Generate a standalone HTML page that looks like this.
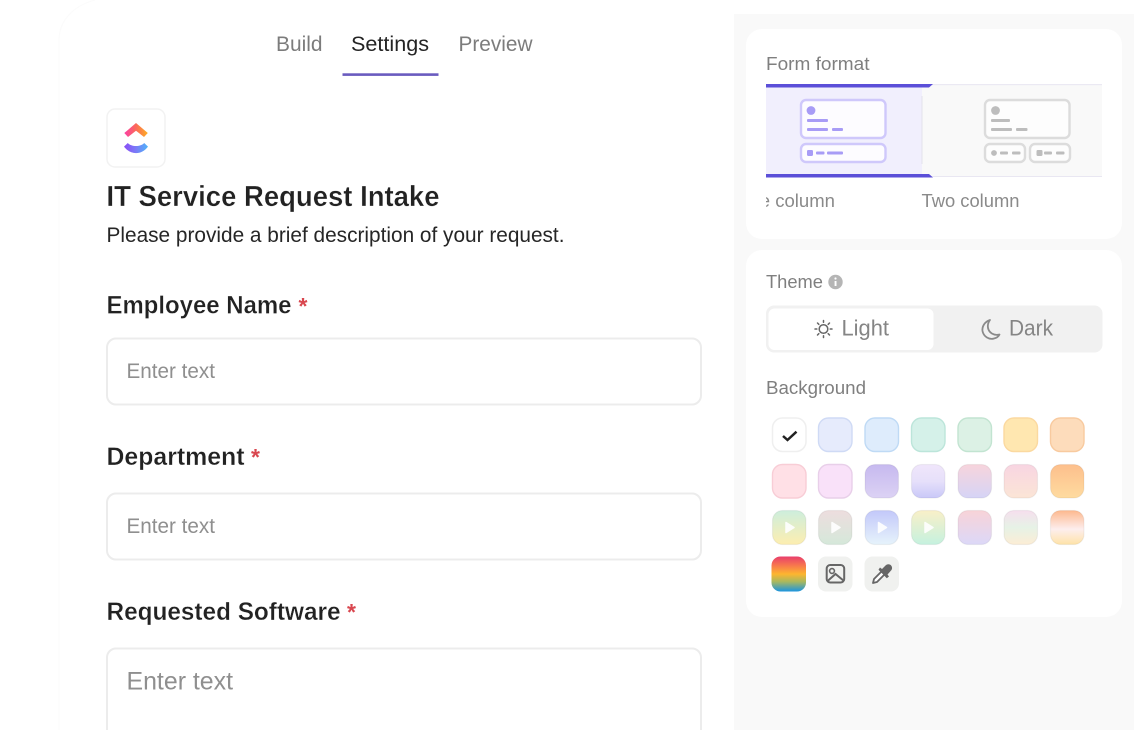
<!DOCTYPE html>
<html><head><meta charset="utf-8"><style>
html,body{margin:0;padding:0;background:#fff;width:1134px;height:730px;overflow:hidden}
svg{display:block}
text{font-family:"Liberation Sans",sans-serif}
.s{stroke:#000;stroke-opacity:.05;stroke-width:1.200}
</style></head><body>
<svg width="1134" height="730" viewBox="0 0 1134 730" xmlns="http://www.w3.org/2000/svg">
<defs>
<linearGradient id="lg1" x1="0" x2="1" y1="0" y2="0"><stop offset="0" stop-color="#fb3ea6"/><stop offset=".5" stop-color="#fb6a5a"/><stop offset="1" stop-color="#fdb022"/></linearGradient>
<linearGradient id="lg2" x1="0" x2="1" y1="0" y2="0"><stop offset="0" stop-color="#8b4cf6"/><stop offset=".5" stop-color="#7a7cf7"/><stop offset="1" stop-color="#4fb4f8"/></linearGradient>
<linearGradient id="g1" x1="0" x2="0" y1="0" y2="1"><stop offset="0" stop-color="#c6b9ef"/><stop offset="1" stop-color="#dcd2f4"/></linearGradient>
<linearGradient id="g2" x1="0" x2="0" y1="0" y2="1"><stop offset="0" stop-color="#f0e6fb"/><stop offset=".5" stop-color="#e6e0fa"/><stop offset="1" stop-color="#c9c8f8"/></linearGradient>
<linearGradient id="g3" x1="0" x2="0" y1="0" y2="1"><stop offset="0" stop-color="#f7d4dc"/><stop offset="1" stop-color="#d6d4f6"/></linearGradient>
<linearGradient id="g4" x1="0" x2="0" y1="0" y2="1"><stop offset="0" stop-color="#f8d5e2"/><stop offset="1" stop-color="#fbe5d6"/></linearGradient>
<linearGradient id="g5" x1="0" x2="0" y1="0" y2="1"><stop offset="0" stop-color="#fdbf8c"/><stop offset="1" stop-color="#fedba0"/></linearGradient>
<linearGradient id="g6" x1="0" x2="0" y1="0" y2="1"><stop offset="0" stop-color="#cdeedd"/><stop offset="1" stop-color="#fdeeb0"/></linearGradient>
<linearGradient id="g7" x1="0" x2="0" y1="0" y2="1"><stop offset="0" stop-color="#edddde"/><stop offset="1" stop-color="#d5e8da"/></linearGradient>
<linearGradient id="g8" x1="0" x2="0" y1="0" y2="1"><stop offset="0" stop-color="#c3c8fa"/><stop offset="1" stop-color="#e6f3fb"/></linearGradient>
<linearGradient id="g9" x1="0" x2="0" y1="0" y2="1"><stop offset="0" stop-color="#f9f0c8"/><stop offset="1" stop-color="#c5f1df"/></linearGradient>
<linearGradient id="g10" x1="0" x2="0" y1="0" y2="1"><stop offset="0" stop-color="#f8d3d8"/><stop offset="1" stop-color="#dcd8f8"/></linearGradient>
<linearGradient id="g11" x1="0" x2="0" y1="0" y2="1"><stop offset="0" stop-color="#f6dfee"/><stop offset=".5" stop-color="#e6f2e6"/><stop offset="1" stop-color="#fcedd5"/></linearGradient>
<linearGradient id="g12" x1="0" x2="0" y1="0" y2="1"><stop offset="0" stop-color="#fdb98e"/><stop offset=".55" stop-color="#fdeeee"/><stop offset="1" stop-color="#fee3a8"/></linearGradient>
<linearGradient id="g13" x1="0" x2="0" y1="0" y2="1"><stop offset="0" stop-color="#e83e6c"/><stop offset=".25" stop-color="#f7764e"/><stop offset=".5" stop-color="#fdb52f"/><stop offset=".72" stop-color="#a9b85e"/><stop offset="1" stop-color="#1a94e0"/></linearGradient>
</defs>

<!-- main page faint outline -->
<path d="M59 730V40C59 22 72 6 95 0" fill="none" stroke="#fbfbfb" stroke-width="1"/>

<!-- tabs -->
<text x="276" y="51" font-size="21" fill="#7c7c7c" textLength="46.500" lengthAdjust="spacingAndGlyphs">Build</text>
<text x="351" y="51" font-size="21" fill="#242424" textLength="78" lengthAdjust="spacingAndGlyphs">Settings</text>
<text x="458.500" y="51" font-size="21" fill="#7c7c7c" textLength="74" lengthAdjust="spacingAndGlyphs">Preview</text>
<rect x="342.500" y="73.300" width="96" height="2.600" fill="#6a5bbf"/>

<!-- logo -->
<rect x="107" y="109" width="58" height="58" rx="8" fill="#fff" stroke="#f2f2f2" stroke-width="1.500"/>
<path d="M124.300 133L136 123L147.800 133L144 137L136 130.800L128 137Z" fill="url(#lg1)"/>
<path d="M127.800 143C131.500 147 140.500 147 144.200 143L148 146.600C141.500 155.300 130.500 155.300 124 146.600Z" fill="url(#lg2)"/>

<!-- headings -->
<text x="106.500" y="206" font-size="28.500" font-weight="700" fill="#222" textLength="333" lengthAdjust="spacingAndGlyphs" stroke="#fff" stroke-width="0.300">IT Service Request Intake</text>
<text x="106.500" y="242" font-size="21.500" fill="#262626" textLength="458" lengthAdjust="spacingAndGlyphs">Please provide a brief description of your request.</text>

<!-- fields -->
<text x="106.500" y="313.500" font-size="25" font-weight="700" fill="#222" textLength="185" lengthAdjust="spacingAndGlyphs" stroke="#fff" stroke-width="0.300">Employee Name</text>
<text x="298.500" y="314" font-size="23" font-weight="700" fill="#d9474f">*</text>
<rect x="107" y="338.500" width="594" height="66" rx="9" fill="#fff" stroke="#ececec" stroke-width="2"/>
<text x="126.500" y="378" font-size="21" fill="#8f8f8f" textLength="88.500" lengthAdjust="spacingAndGlyphs">Enter text</text>

<text x="106.500" y="465" font-size="25" font-weight="700" fill="#222" textLength="138" lengthAdjust="spacingAndGlyphs" stroke="#fff" stroke-width="0.300">Department</text>
<text x="251" y="465" font-size="23" font-weight="700" fill="#d9474f">*</text>
<rect x="107" y="493.500" width="594" height="66" rx="9" fill="#fff" stroke="#ececec" stroke-width="2"/>
<text x="126.500" y="533" font-size="21" fill="#8f8f8f" textLength="88.500" lengthAdjust="spacingAndGlyphs">Enter text</text>

<text x="106.500" y="620" font-size="25" font-weight="700" fill="#222" textLength="234" lengthAdjust="spacingAndGlyphs" stroke="#fff" stroke-width="0.300">Requested Software</text>
<text x="347" y="620" font-size="23" font-weight="700" fill="#d9474f">*</text>
<path d="M107 730V657.500a9 9 0 0 1 9-9H692a9 9 0 0 1 9 9V730" fill="#fff" stroke="#ececec" stroke-width="2"/>
<text x="126.500" y="689.500" font-size="25" fill="#8f8f8f" textLength="106.500" lengthAdjust="spacingAndGlyphs">Enter text</text>

<!-- right panel -->
<rect x="734" y="14" width="400" height="716" fill="#f9f9f9"/>
<rect x="746" y="29" width="376" height="210" rx="16" fill="#fff"/>
<rect x="746" y="250" width="376" height="367" rx="16" fill="#fff"/>

<text x="766" y="70" font-size="18" fill="#7f7f7f" textLength="103.500" lengthAdjust="spacingAndGlyphs">Form format</text>

<!-- format selector -->
<rect x="766" y="87" width="160" height="87" fill="#f1effd"/>
<rect x="926" y="85" width="176" height="91" fill="#f9f9f9"/>
<rect x="922" y="87.500" width="4.500" height="87" fill="#f9f9f9"/>
<rect x="921.500" y="96" width="1" height="68" fill="#e4e2ec"/>
<rect x="922" y="84" width="180" height="1.200" fill="#ebe9f3"/>
<rect x="922" y="176" width="180" height="1" fill="#e9e7f2"/>
<path d="M766 84H933L929 87.500H766Z" fill="#5b4fd8"/>
<path d="M766 174H929L933 177.500H766Z" fill="#5b4fd8"/>

<!-- one column art -->
<rect x="801" y="100" width="84.500" height="38" rx="5" fill="#fdfcff" stroke="#cfc8fb" stroke-width="2.400"/>
<circle cx="811" cy="110.500" r="4.400" fill="#a89cf6"/>
<rect x="807" y="119" width="21" height="3" rx="1" fill="#a89cf6"/>
<rect x="807" y="128" width="21" height="3" rx="1" fill="#a89cf6"/>
<rect x="832" y="128" width="11" height="3" rx="1" fill="#a89cf6"/>
<rect x="801" y="144" width="84.500" height="18" rx="5" fill="#fdfcff" stroke="#cfc8fb" stroke-width="2.400"/>
<rect x="807" y="150" width="6" height="6" rx="1.200" fill="#a89cf6"/>
<rect x="816" y="151.500" width="8.500" height="3" rx="1" fill="#a89cf6"/>
<rect x="827" y="151.500" width="16" height="3" rx="1" fill="#a89cf6"/>

<!-- two column art -->
<rect x="985" y="100" width="84.500" height="38" rx="5" fill="#fdfdfd" stroke="#dcdcdc" stroke-width="2.400"/>
<circle cx="995.500" cy="110.500" r="4.400" fill="#bdbdbd"/>
<rect x="991" y="119" width="19" height="3" rx="1" fill="#bdbdbd"/>
<rect x="991" y="128" width="21" height="3" rx="1" fill="#bdbdbd"/>
<rect x="1016" y="128" width="11.500" height="3" rx="1" fill="#bdbdbd"/>
<rect x="985" y="144" width="40" height="18" rx="5" fill="#fdfdfd" stroke="#dcdcdc" stroke-width="2.400"/>
<rect x="1030" y="144" width="40" height="18" rx="5" fill="#fdfdfd" stroke="#dcdcdc" stroke-width="2.400"/>
<circle cx="994" cy="153" r="2.900" fill="#bdbdbd"/>
<rect x="1000" y="151.500" width="8" height="3" rx="1" fill="#bdbdbd"/>
<rect x="1012" y="151.500" width="8.500" height="3" rx="1" fill="#bdbdbd"/>
<rect x="1036.500" y="150" width="6" height="6" rx="1.200" fill="#bdbdbd"/>
<rect x="1044" y="151.500" width="8" height="3" rx="1" fill="#bdbdbd"/>
<rect x="1056" y="151.500" width="8.500" height="3" rx="1" fill="#bdbdbd"/>

<svg x="766" y="190" width="80" height="24" viewBox="0 0 80 24">
<text x="-31" y="17" font-size="18.500" fill="#8a8a8a" textLength="100" lengthAdjust="spacingAndGlyphs">One column</text>
</svg>
<text x="921.500" y="207" font-size="18.500" fill="#8a8a8a" textLength="98" lengthAdjust="spacingAndGlyphs">Two column</text>

<!-- theme -->
<text x="766" y="288" font-size="18" fill="#7f7f7f" textLength="57" lengthAdjust="spacingAndGlyphs">Theme</text>
<circle cx="835.500" cy="282" r="7.200" fill="#b5b5b5"/>
<rect x="834.600" y="281" width="1.900" height="5" fill="#fff"/>
<circle cx="835.500" cy="278.500" r="1.100" fill="#fff"/>

<rect x="766" y="305.500" width="336.500" height="47" rx="8" fill="#f1f1f1"/>
<rect x="768.500" y="308.500" width="165" height="41.500" rx="6" fill="#fff"/>
<g stroke="#666" stroke-width="1.500" fill="none" stroke-linecap="round">
<circle cx="823.500" cy="329" r="4.300"/>
<path d="M823.500 320.500v1.800M823.500 335.700v1.800M815 329h1.800M830.200 329h1.800M817.500 323l1.300 1.300M828.200 333.700l1.300 1.300M817.500 335l1.300-1.300M828.200 324.300l1.300-1.300"/>
</g>
<text x="841.500" y="335.500" font-size="22" fill="#858585" textLength="47.500" lengthAdjust="spacingAndGlyphs">Light</text>
<path d="M990 320C984 322 982 327 982.500 331C983.500 336.500 989 340 994 338.500C996.500 338 998.500 336.500 999.500 334.500C993.500 336 989 332.500 988 328C987.500 325 988 322.500 990 320Z" fill="none" stroke="#8a8a8a" stroke-width="1.800" stroke-linejoin="round"/>
<text x="1009" y="335.500" font-size="22" fill="#858585" textLength="44" lengthAdjust="spacingAndGlyphs">Dark</text>

<text x="766" y="394" font-size="18" fill="#7f7f7f" textLength="100" lengthAdjust="spacingAndGlyphs">Background</text>

<!-- swatches row 1 -->
<rect x="772.500" y="418" width="33.500" height="33.500" rx="10" fill="#fff" stroke="#efefef" stroke-width="1.500"/>
<path d="M783 436l4.500 4 9-8.300" fill="none" stroke="#222" stroke-width="2.500"/>
<rect x="818.500" y="418" width="33.500" height="33.500" rx="10" fill="#e6ebfc" stroke="#cfdaf5" stroke-width="1.400"/>
<rect x="865" y="418" width="33.500" height="33.500" rx="10" fill="#deecfc" stroke="#bfdaf5" stroke-width="1.400"/>
<rect x="911.500" y="418" width="33.500" height="33.500" rx="10" fill="#d5f1e9" stroke="#bce5da" stroke-width="1.400"/>
<rect x="958" y="418" width="33.500" height="33.500" rx="10" fill="#dcf1e5" stroke="#c2e4d1" stroke-width="1.400"/>
<rect x="1004" y="418" width="33.500" height="33.500" rx="10" fill="#ffe7b0" stroke="#fbd9a0" stroke-width="1.400"/>
<rect x="1050.500" y="418" width="33.500" height="33.500" rx="10" fill="#fddcbb" stroke="#f8ca9f" stroke-width="1.400"/>

<!-- row 2 -->
<rect x="772.500" y="464.500" width="33.500" height="33.500" rx="10" fill="#ffe0e6" stroke="#f8cdd6" stroke-width="1.400"/>
<rect x="818.500" y="464.500" width="33.500" height="33.500" rx="10" fill="#f9e1f9" stroke="#e8cfe9" stroke-width="1.400"/>
<rect class="s" x="865" y="464.500" width="33.500" height="33.500" rx="10" fill="url(#g1)"/>
<rect class="s" x="911.500" y="464.500" width="33.500" height="33.500" rx="10" fill="url(#g2)"/>
<rect class="s" x="958" y="464.500" width="33.500" height="33.500" rx="10" fill="url(#g3)"/>
<rect class="s" x="1004" y="464.500" width="33.500" height="33.500" rx="10" fill="url(#g4)"/>
<rect class="s" x="1050.500" y="464.500" width="33.500" height="33.500" rx="10" fill="url(#g5)"/>

<!-- row 3 -->
<rect class="s" x="772.500" y="510.500" width="33.500" height="34" rx="10" fill="url(#g6)"/>
<rect class="s" x="818.500" y="510.500" width="33.500" height="34" rx="10" fill="url(#g7)"/>
<rect class="s" x="865" y="510.500" width="33.500" height="34" rx="10" fill="url(#g8)"/>
<rect class="s" x="911.500" y="510.500" width="33.500" height="34" rx="10" fill="url(#g9)"/>
<g fill="#fff" stroke="#fff" stroke-width="1.500" stroke-linejoin="round" opacity=".92">
<path d="M786 522.500v10l8-5Z"/>
<path d="M832 522.500v10l8-5Z"/>
<path d="M878.500 522.500v10l8-5Z"/>
<path d="M925 522.500v10l8-5Z"/>
</g>
<rect class="s" x="958" y="510.500" width="33.500" height="34" rx="10" fill="url(#g10)"/>
<rect class="s" x="1004" y="510.500" width="33.500" height="34" rx="10" fill="url(#g11)"/>
<rect class="s" x="1050.500" y="510.500" width="33.500" height="34" rx="10" fill="url(#g12)"/>

<!-- row 4 -->
<rect x="771.500" y="556.500" width="34.500" height="35" rx="9" fill="url(#g13)"/>
<rect x="818" y="556.500" width="34.500" height="35" rx="8" fill="#f0f1ef"/>
<rect x="826.700" y="565" width="17.500" height="17.500" rx="3.500" fill="none" stroke="#666" stroke-width="2"/>
<circle cx="832" cy="571" r="2.400" fill="none" stroke="#666" stroke-width="1.600"/>
<path d="M827 581.500l8.500-7.500 8.500 7" fill="none" stroke="#666" stroke-width="2"/>
<rect x="864.500" y="556.500" width="34.500" height="35" rx="8" fill="#f0f1ef"/>
<path d="M873 583l1-4 8.500-8.500 3 3L877 582Z" fill="#fff" stroke="#666" stroke-width="1.800" stroke-linejoin="round"/>
<path d="M880 567.500l2 1.500 3.500-3.500c2-2 4.500-1.500 5.800.2 1.200 1.700 1 3.700-.6 5.200L887.500 574.500l1.500 2-2.200 1.800-8.300-8.500Z" fill="#666"/>
</svg>
</body></html>
